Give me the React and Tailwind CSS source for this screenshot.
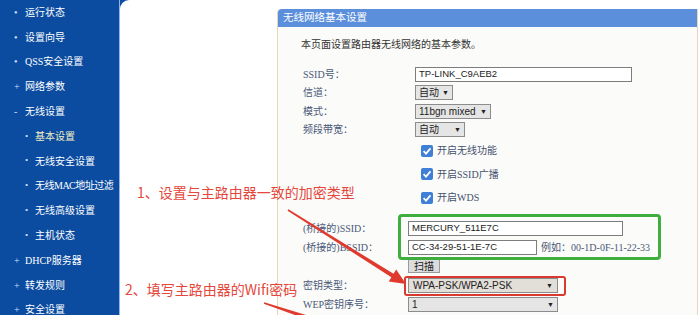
import React from 'react';

const menu = [
  { text: '运行状态', mark: '•' },
  { text: '设置向导', mark: '•' },
  { text: 'QSS安全设置', mark: '•' },
  { text: '网络参数', mark: '+' },
  { text: '无线设置', mark: '-' },
  { text: '基本设置', mark: '•', sub: true, active: true },
  { text: '无线安全设置', mark: '•', sub: true },
  { text: '无线MAC地址过滤', mark: '•', sub: true, tight: true },
  { text: '无线高级设置', mark: '•', sub: true },
  { text: '主机状态', mark: '•', sub: true },
  { text: 'DHCP服务器', mark: '+' },
  { text: '转发规则', mark: '+' },
  { text: '安全设置', mark: '+' },
];

const serif = { fontFamily: '"Liberation Serif", "Noto Sans CJK SC", serif' };
const sans = { fontFamily: '"Liberation Sans", "Noto Sans CJK SC", sans-serif' };

const Select = ({ value, width }) => (
  <div
    className="h-[15px] flex items-center justify-between bg-[#e5e5e5] border border-[#8c8c8c] px-[3px] text-[10px] text-[#222]"
    style={{ ...sans, width }}
  >
    <span>{value}</span>
    <span className="text-[7px] leading-none">▼</span>
  </div>
);

const Input = ({ value, width }) => (
  <div
    className="h-[15px] flex items-center bg-white border border-[#7d7d7d] px-[3px] text-[9.5px] text-[#222]"
    style={{ ...sans, width }}
  >
    {value}
  </div>
);

const Check = ({ label }) => (
  <div className="h-[23.5px] flex items-center pl-[6px] gap-[4px]">
    <svg width="12" height="12" viewBox="0 0 12 12">
      <rect x="0" y="0" width="12" height="12" rx="2" fill="#3f7fd6" />
      <path d="M2.6 6.2 L5 8.6 L9.5 3.4" stroke="#fff" strokeWidth="1.8" fill="none" />
    </svg>
    <span className="text-[10px] text-[#44516e]" style={serif}>{label}</span>
  </div>
);

const Row = ({ label, labelW, h, children }) => (
  <div className="flex items-center" style={{ height: h }}>
    <div className="text-[10px] text-[#4a5878] shrink-0 whitespace-nowrap" style={{ ...serif, width: labelW }}>{label}</div>
    {children}
  </div>
);

export default function App() {
  return (
    <div className="relative w-[700px] h-[315px] overflow-hidden flex bg-white">
      {/* sidebar */}
      <aside className="w-[120px] shrink-0 bg-[#0b4ca0] border-r border-[#8fb6e6] overflow-hidden">
        {menu.map((m) => (
          <div
            key={m.text}
            className={`h-[24.8px] flex items-center whitespace-nowrap text-[10px] ${m.sub ? 'pl-[25px]' : 'pl-[14px]'}`}
            style={serif}
          >
            <span className={`shrink-0 text-[#cfe0ff] ${m.sub ? 'w-[10px] text-[9px]' : 'w-[11px] text-[10px]'}`}>{m.mark}</span>
            <span className={`${m.active ? 'text-[#f4efc4]' : 'text-white'} ${m.tight ? 'tracking-[-0.5px]' : ''}`}>{m.text}</span>
          </div>
        ))}
      </aside>

      {/* main */}
      <div className="flex-1 bg-[#0b4ca0]">
        <div className="h-full bg-white rounded-tl-[9px] pl-[157px] pt-[9px]">
          <div className="w-[421px] h-full border-x border-[#e4d8bb] bg-[#fbfbf9] rounded-tl-[4px]">
            <div className="h-[18px] bg-[#5b8fdc] rounded-tl-[4px] flex items-center pl-[5px] text-white text-[10.5px]" style={sans}>
              无线网络基本设置
            </div>
            <div className="pt-[11px] pl-[23px] leading-[14px] text-[10px] text-[#333]" style={sans}>
              本页面设置路由器无线网络的基本参数。
            </div>

            <div className="pl-[25px] mt-[13px]">
              <Row label="SSID号：" labelW={112} h="18.5px"><Input value="TP-LINK_C9AEB2" width={217} /></Row>
              <Row label="信道：" labelW={112} h="18.5px"><Select value="自动" width={38} /></Row>
              <Row label="模式：" labelW={112} h="18.5px"><Select value="11bgn mixed" width={76} /></Row>
              <Row label="频段带宽：" labelW={112} h="18.5px"><Select value="自动" width={50} /></Row>
              <div className="pl-[112px]">
                <Check label="开启无线功能" />
                <Check label="开启SSID广播" />
                <Check label="开启WDS" />
              </div>

              <div className="mt-[9px]">
                <Row label="(桥接的)SSID：" labelW={105} h="19px"><Input value="MERCURY_511E7C" width={215} /></Row>
                <Row label="(桥接的)BSSID：" labelW={105} h="19px">
                  <Input value="CC-34-29-51-1E-7C" width={129} />
                  <span className="ml-[4px] text-[10px] text-[#4a5878]" style={serif}>例如：00-1D-0F-11-22-33</span>
                </Row>
                <Row label="" labelW={105} h="19px">
                  <div className="h-[14px] w-[32px] flex items-center justify-center bg-[#dcdcdc] border border-[#9a9a9a] text-[10px] text-[#222]" style={sans}>扫描</div>
                </Row>
                <Row label="密钥类型：" labelW={105} h="19px">
                  <div className="h-[15px] w-[150px] flex items-center justify-between bg-[#e2ded8] border border-[#8c8c8c] px-[4px] text-[10px] text-[#222]" style={sans}>
                    <span>WPA-PSK/WPA2-PSK</span>
                    <span className="text-[7px] leading-none">▼</span>
                  </div>
                </Row>
                <Row label="WEP密钥序号：" labelW={105} h="19px"><Select value="1" width={150} /></Row>
                <Row label="" labelW={105} h="19px">
                  <div className="h-[15px] w-[150px] bg-[#e5e5e5] border border-[#8c8c8c]" />
                </Row>
              </div>
            </div>
          </div>
        </div>
      </div>

      {/* annotation overlays */}
      <div className="absolute left-[398px] top-[214px] w-[263px] h-[46px] border-[3px] border-[#3fae3f] rounded-[4px]" />
      <div className="absolute left-[404px] top-[276px] w-[162px] h-[20px] border-[2.5px] border-[#d93a30] rounded-[3px]" />
      <div className="absolute left-[137px] top-[183px] text-[14px] leading-[18px] text-[#e4473c]" style={{ fontFamily: '"Noto Sans CJK SC", sans-serif' }}>
        1、设置与主路由器一致的加密类型
      </div>
      <div className="absolute left-[125px] top-[280px] text-[14px] leading-[18px] text-[#e4473c]" style={{ fontFamily: '"Noto Sans CJK SC", sans-serif' }}>
        2、填写主路由器的Wifi密码
      </div>
      <svg className="absolute inset-0 pointer-events-none" width="700" height="315" viewBox="0 0 700 315">
        <polygon
          fill="#e03a2e"
          points="288.42,209.32 393.51,273.81 396.17,269.57 406,284 388.73,281.43 391.39,277.19 287.58,210.68"
        />
        <polygon fill="#e03a2e" points="264.25,302.24 330.8,322.6 329.2,327.4 263.75,303.76" />
      </svg>
    </div>
  );
}
